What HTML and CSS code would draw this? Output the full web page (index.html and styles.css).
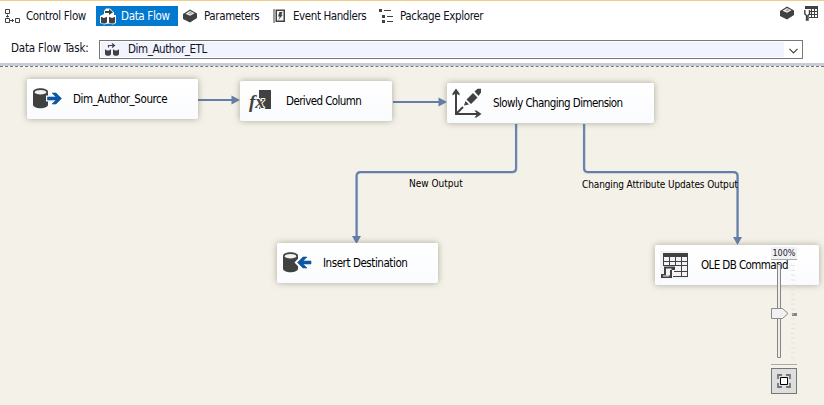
FILE: index.html
```html
<!DOCTYPE html>
<html lang="en">
<head>
<meta charset="utf-8">
<title>Data Flow designer</title>
<link rel="stylesheet" href="styles.css">
</head>
<body>
<svg class="defs" width="0" height="0" aria-hidden="true">
  <symbol id="box" viewBox="0 0 16 14">
    <path d="M1 5 8 0.5 15 4.5V9L8 13.5 1 10Z" fill="#414141"/>
    <path d="M3.5 4.800 8 2 12.5 4.2 8 6.8Z" fill="#f2f2f2"/>
    <path d="M6 4.400 8.6 2.800 10.8 4 8.2 5.400Z" fill="#aaa"/>
  </symbol>
  <symbol id="flow" viewBox="0 0 16 14">
    <path d="M1 6.5V11c0 2.4 6 2.4 6 0V6.500ZM9 6.500V11c0 2.400 6 2.400 6 0V6.500Z" fill="currentColor"/>
    <ellipse class="lid" cx="4" cy="6.500" rx="2.200" ry="1"/>
    <ellipse class="lid" cx="12" cy="6.500" rx="2.200" ry="1"/>
    <path d="M4.500 4.500V2.500H10M8 .500 10.500 2.500 8 4.500" fill="none" stroke="currentColor" stroke-width="1.200"/>
  </symbol>
</svg>

<header class="top">
  <nav class="tabs">
    <a class="tab control">
      <svg class="icon" width="15" height="15" viewBox="0 0 15 15" fill="none" stroke="#414141"><path d="M.5.5h4v4h-4zM.5 9.500h4v4h-4zM10.500 9.500h4v4h-4zM2.500 5.500v3M1 7.500h3M5 11.500h4M7.500 10v3"/></svg>
      <span class="t1">Control Flow</span>
    </a>
    <a class="tab data">
      <svg class="icon" width="18" height="17" viewBox="0 0 18 17"><path d="M5 6V3L7 .5h4L15 4.500V7h2v8l-3 1.500-4-1-5 1L1 15V8Z" fill="#fff"/><g fill="#414141"><path d="M2 9v5c0 2 6 2 6 0V9ZM10 9v5c0 2 6 2 6 0V9Z"/><path d="M6 5V3h4V1l4 3.200L10 7V5Z"/></g><path d="M3 8.800c0-1.500 4-1.500 4 0s-4 1.500-4 0M11 8.800c0-1.500 4-1.500 4 0s-4 1.500-4 0" fill="#fff"/></svg>
      <span class="t2">Data Flow</span>
    </a>
    <a class="tab params">
      <svg class="icon" width="16" height="14"><use href="#box"/></svg>
      <span class="t3">Parameters</span>
    </a>
    <a class="tab events">
      <svg class="icon" width="13" height="14" viewBox="0 0 13 14"><path d="M3.250 1.250h8v11h-8z" fill="#f6f6f6" stroke="#414141" stroke-width="1.500"/><path d="M1 .500v13" stroke="#414141" stroke-width="2" stroke-dasharray="1 1"/><path d="M6.500 3h3L8.300 5.800h1.500L5.500 11 6.800 7.500H5Z" fill="#414141"/></svg>
      <span class="t4">Event Handlers</span>
    </a>
    <a class="tab explorer">
      <svg class="icon" width="15" height="14" viewBox="0 0 15 14" fill="#414141"><path d="M0 0h3v3H0zM3 6h3v3H3zM3 11h3v3H3zM5 1h7v1H5zM8 7h6v1H8zM8 12h6v1H8z"/></svg>
      <span class="t5">Package Explorer</span>
    </a>
    <div class="tools">
      <svg width="16" height="14"><use href="#box"/></svg>
      <svg width="14" height="15" viewBox="0 0 14 15"><path d="M1 0h13v12H5V3H1Z" fill="#414141"/><path d="M5 3h2v2H5zM8 3h2v2H8zM11 3h2v2h-2zM5 6h2v2H5zM8 6h2v2H8zM11 6h2v2h-2zM5 9h2v2H5zM8 9h2v2H8zM11 9h2v2h-2z" fill="#fff"/><path d="M.800 4v4L2.500 9.500V14h1.500V9.500L5.500 8V4" fill="none" stroke="#414141" stroke-width="1.400"/></svg>
    </div>
  </nav>
  <div class="task">
    <label class="t6">Data Flow Task:</label>
    <div class="combo">
      <div class="value">
        <svg class="mini" width="16" height="14"><use href="#flow"/></svg>
        <span class="t7">Dim_Author_ETL</span>
      </div>
      <svg class="chevron" width="9" height="6" viewBox="0 0 9 6"><path d="M.5.8 4.500 4.800 8.500.8" fill="none" stroke="#444" stroke-width="1.200"/></svg>
    </div>
  </div>
</header>

<main class="canvas">
  <svg class="wires" width="824" height="338" viewBox="0 67 824 338">
    <g fill="none" stroke="#a9b8cd" stroke-width="2.600">
      <path d="M516.200 124V168.500Q516.200 172.300 512 172.300H361Q356.800 172.300 356.800 176V237"/>
      <path d="M584.200 124V168.500Q584.200 172.300 588 172.300H733.500Q737.700 172.300 737.700 176V239"/>
    </g>
    <g fill="none" stroke="#637fa9" stroke-width="1.800">
      <path d="M198 100H234M393 102H441"/>
      <path d="M516 124V168Q516 172 512 172H361Q356.500 172 356.500 176V237"/>
      <path d="M584 124V168Q584 172 588 172H733Q737.500 172 737.500 176V239"/>
    </g>
    <path d="M231.500 95.500 240 100 231.500 104.500ZM438.500 97.500 447 102 438.500 106.500ZM352 236H361L356.500 244ZM733 237H742L737.500 245Z" fill="#637fa9"/>
  </svg>

  <div class="node source">
    <svg class="glyph" width="30" height="22" viewBox="0 0 30 22"><path d="M1 4V16.500c0 5 15 5 15 0V4c0-5-15-5-15 0Z" fill="#414141"/><ellipse cx="8.500" cy="4.200" rx="5.700" ry="2.300" fill="#f2f2f2"/><path d="M14 7.500h6V3.500h4l6 7-6 7h-4v-4h-6Z" fill="#fbfcfe"/><path d="M15.500 9H24L20 5h4l5.500 5.500L24 16h-4l4-4h-8.500Z" fill="#0c57a4" stroke="#0c57a4" stroke-width=".6"/></svg>
    <span class="n1">Dim_Author_Source</span>
  </div>
  <div class="node derived">
    <svg class="glyph" width="27" height="25" viewBox="0 0 27 25"><path d="M13 1h12v19H13z" fill="#414141"/><text class="fx halo" x="3" y="19">fx</text><text class="fx" x="3" y="19">fx</text></svg>
    <span class="n2">Derived Column</span>
  </div>
  <div class="node slowly">
    <svg class="glyph" width="30" height="30" viewBox="0 0 30 30"><path d="M4 5V26H26M4 26 11 19" fill="none" stroke="#414141" stroke-width="2"/><path d="M4 .5 7.500 5.500V7.500L5 6H3L.500 7.500V5.500ZM29.500 26 24.500 29.500H22.500L24.500 27V25L22.500 22.500H24.500ZM12 17.500 13.500 13 17 16.500ZM14.500 11.500 21 5 25.500 9.500 19 16ZM22.500 3.500 25.500 .8H29v3.700L26.500 8Z" fill="#414141"/></svg>
    <span class="n3">Slowly Changing Dimension</span>
  </div>
  <div class="node insert">
    <svg class="glyph" width="30" height="22" viewBox="0 0 30 22"><path d="M1 4V16.500c0 5 15 5 15 0V4c0-5-15-5-15 0Z" fill="#414141"/><ellipse cx="8.500" cy="4.200" rx="5.700" ry="2.300" fill="#f2f2f2"/><path d="M12.500 10.500 19 3.500h6V8h5v6h-5v3.500h-6Z" fill="#fbfcfe"/><path d="M29 9H21l4-4h-4l-5.500 5.500L21 16h4l-4-4h8Z" fill="#0c57a4" stroke="#0c57a4" stroke-width=".6"/></svg>
    <span class="n4">Insert Destination</span>
  </div>
  <div class="node oledb">
    <svg class="glyph" width="28" height="28" viewBox="0 0 28 28"><path d="M0 0h28v28H0z" fill="#f3f3f5"/><path d="M3 2h25v4H3z" fill="#414141"/><path d="M3.500 5V14M9.500 5V14M15.500 5V14M21.500 5V26M27.500 5V26M3 10.500H28M3 14.500H28M14 20.500H28M13 25.500H28" fill="none" stroke="#414141"/><path d="M4 15.500h11V19h-3v8H1v-4h3Z" fill="#414141"/><path d="M6 17.500h5.500V19H10v5.500H6Z" fill="#f3f3f5"/><path d="M3 25h6" stroke="#f3f3f5"/></svg>
    <span class="n5">OLE DB Command</span>
  </div>

  <span class="label new">New Output</span>
  <span class="label changing">Changing Attribute Updates Output</span>

  <aside class="zoom">
    <span class="percent">100%</span>
    <svg class="slider" width="27" height="108" viewBox="0 0 27 108">
      <path d="M6.500 4.500h3v93h-3z" fill="#eee" stroke="#858585"/>
      <path d="M22 5V100" stroke="#e5e3de" stroke-width="4" stroke-dasharray="1 3.850"/>
      <path d="M.5 48.500h11l5.500 5-5.500 5H.5Z" fill="#f1f1f1" stroke="#8b8b8b"/>
      <path d="M21 53h5v3h-5z" fill="#858585"/><path d="M21 54h2" stroke="#c0c0c0"/>
    </svg>
    <div class="fit"><svg width="14" height="14" viewBox="0 0 14 14"><path d="M1 5V1h4M9 1h4v4M13 9v4H9M5 13H1V9" fill="none" stroke="#777" stroke-width="1.800"/><path d="M3.500 3.500h7v7h-7z" fill="#fff" stroke="#000"/></svg></div>
  </aside>
</main>
</body>
</html>
```
FILE: styles.css
```css
* { box-sizing: border-box; }
body {
  margin: 0;
  width: 824px;
  height: 405px;
  overflow: hidden;
  background: #fff;
  color: #000;
  font: 11.5px/14px "DejaVu Sans Condensed", "DejaVu Sans", sans-serif;
  font-stretch: condensed;
}
svg { display: block; flex: none; }
.defs { position: absolute; }
span, label { white-space: nowrap; }
.t1 { letter-spacing: -.36px; }
.t2 { letter-spacing: -.33px; }
.t3 { letter-spacing: -.38px; }
.t4 { letter-spacing: -.42px; }
.t5 { letter-spacing: -.37px; }
.t6 { letter-spacing: -.2px; }
.t7 { letter-spacing: -.42px; }
.n1 { letter-spacing: -.43px; }
.n2 { letter-spacing: -.58px; }
.n3 { letter-spacing: -.58px; }
.n4 { letter-spacing: -.44px; }
.n5 { letter-spacing: -.6px; }
.top {
  height: 67px;
  border-top: 1px solid #f5cc84;
  border-bottom: 1px dashed #777;
  box-shadow: inset 0 -3px #c8ccd8;
  color: #111122;
}
.tabs { display: flex; height: 31px; padding-top: 5px; }
.tab { display: flex; align-items: center; height: 20px; }
.tab span { margin-top: -1px; }
.control { width: 96px; padding-left: 5px; gap: 6px; }
.data { width: 82px; padding-left: 3px; gap: 4px; background: #0079cf; color: #fff; }
.params { width: 89px; padding-left: 4px; gap: 6px; }
.events { width: 109px; padding-left: 6px; gap: 7px; }
.explorer { padding-left: 3px; gap: 6px; }
.tools { display: flex; align-items: flex-start; gap: 9px; margin-left: auto; padding-right: 6px; }
.task { display: flex; align-items: center; height: 35px; padding: 0 21px 2px 11px; }
.task label { width: 88px; margin-top: -2px; }
.combo {
  display: flex;
  align-items: center;
  width: 704px;
  height: 19px;
  margin-top: 2px;
  border: 1px solid #777;
  padding: 1px 4px 1px 1px;
  background: #fff;
}
.value { display: flex; align-items: center; width: 683px; height: 15px; padding-left: 3px; gap: 8px; background: #f1f4fe; }
.value span { margin-top: -1px; }
.mini { color: #414141; }
.lid { fill: #f1f4fe; }
.chevron { margin-left: 5px; margin-top: 2px; }

.canvas { position: relative; height: 338px; background: #f4f1e9; overflow: hidden; }
.wires { position: absolute; inset: 0; }
.node {
  position: absolute;
  display: flex;
  align-items: center;
  height: 40px;
  border-radius: 2px;
  background: linear-gradient(#fff, #fafbfe);
  box-shadow: 0 0 6px rgba(100, 95, 70, .5);
}
.source { left: 27px; top: 12px; width: 171px; padding-left: 5px; gap: 11px; }
.derived { left: 240px; top: 14px; width: 152px; padding-left: 6px; gap: 13px; }
.slowly { left: 447px; top: 16px; width: 207px; padding-left: 5px; gap: 11px; }
.insert { left: 277px; top: 176px; width: 161px; padding-left: 5px; gap: 11px; }
.oledb { left: 655px; top: 178px; width: 164px; padding-left: 5px; gap: 13px; }
.fx { font: italic bold 19px "Liberation Serif", serif; fill: #414141; }
.halo { stroke: #fbfcfe; stroke-width: 2px; }
.label { position: absolute; font-size: 10px; line-height: 12px; }
.new { left: 409px; top: 111px; }
.changing { left: 582px; top: 112px; letter-spacing: -.12px; }
.zoom { position: absolute; left: 771px; top: 180px; width: 27px; }
.percent {
  display: block;
  width: 26px;
  height: 13px;
  border-bottom: 1px solid #aaa;
  background: #f1f1f3;
  text-align: center;
  font-size: 9px;
  line-height: 12px;
  color: #223;
}
.slider { width: 27px; height: 108px; }
.fit {
  display: flex;
  align-items: center;
  justify-content: center;
  width: 26px;
  height: 26px;
  border: 1px solid #777;
  background: #dedede;
  box-shadow: 0 -3px #f4f1e9, 0 -4px #aaa;
}
```
